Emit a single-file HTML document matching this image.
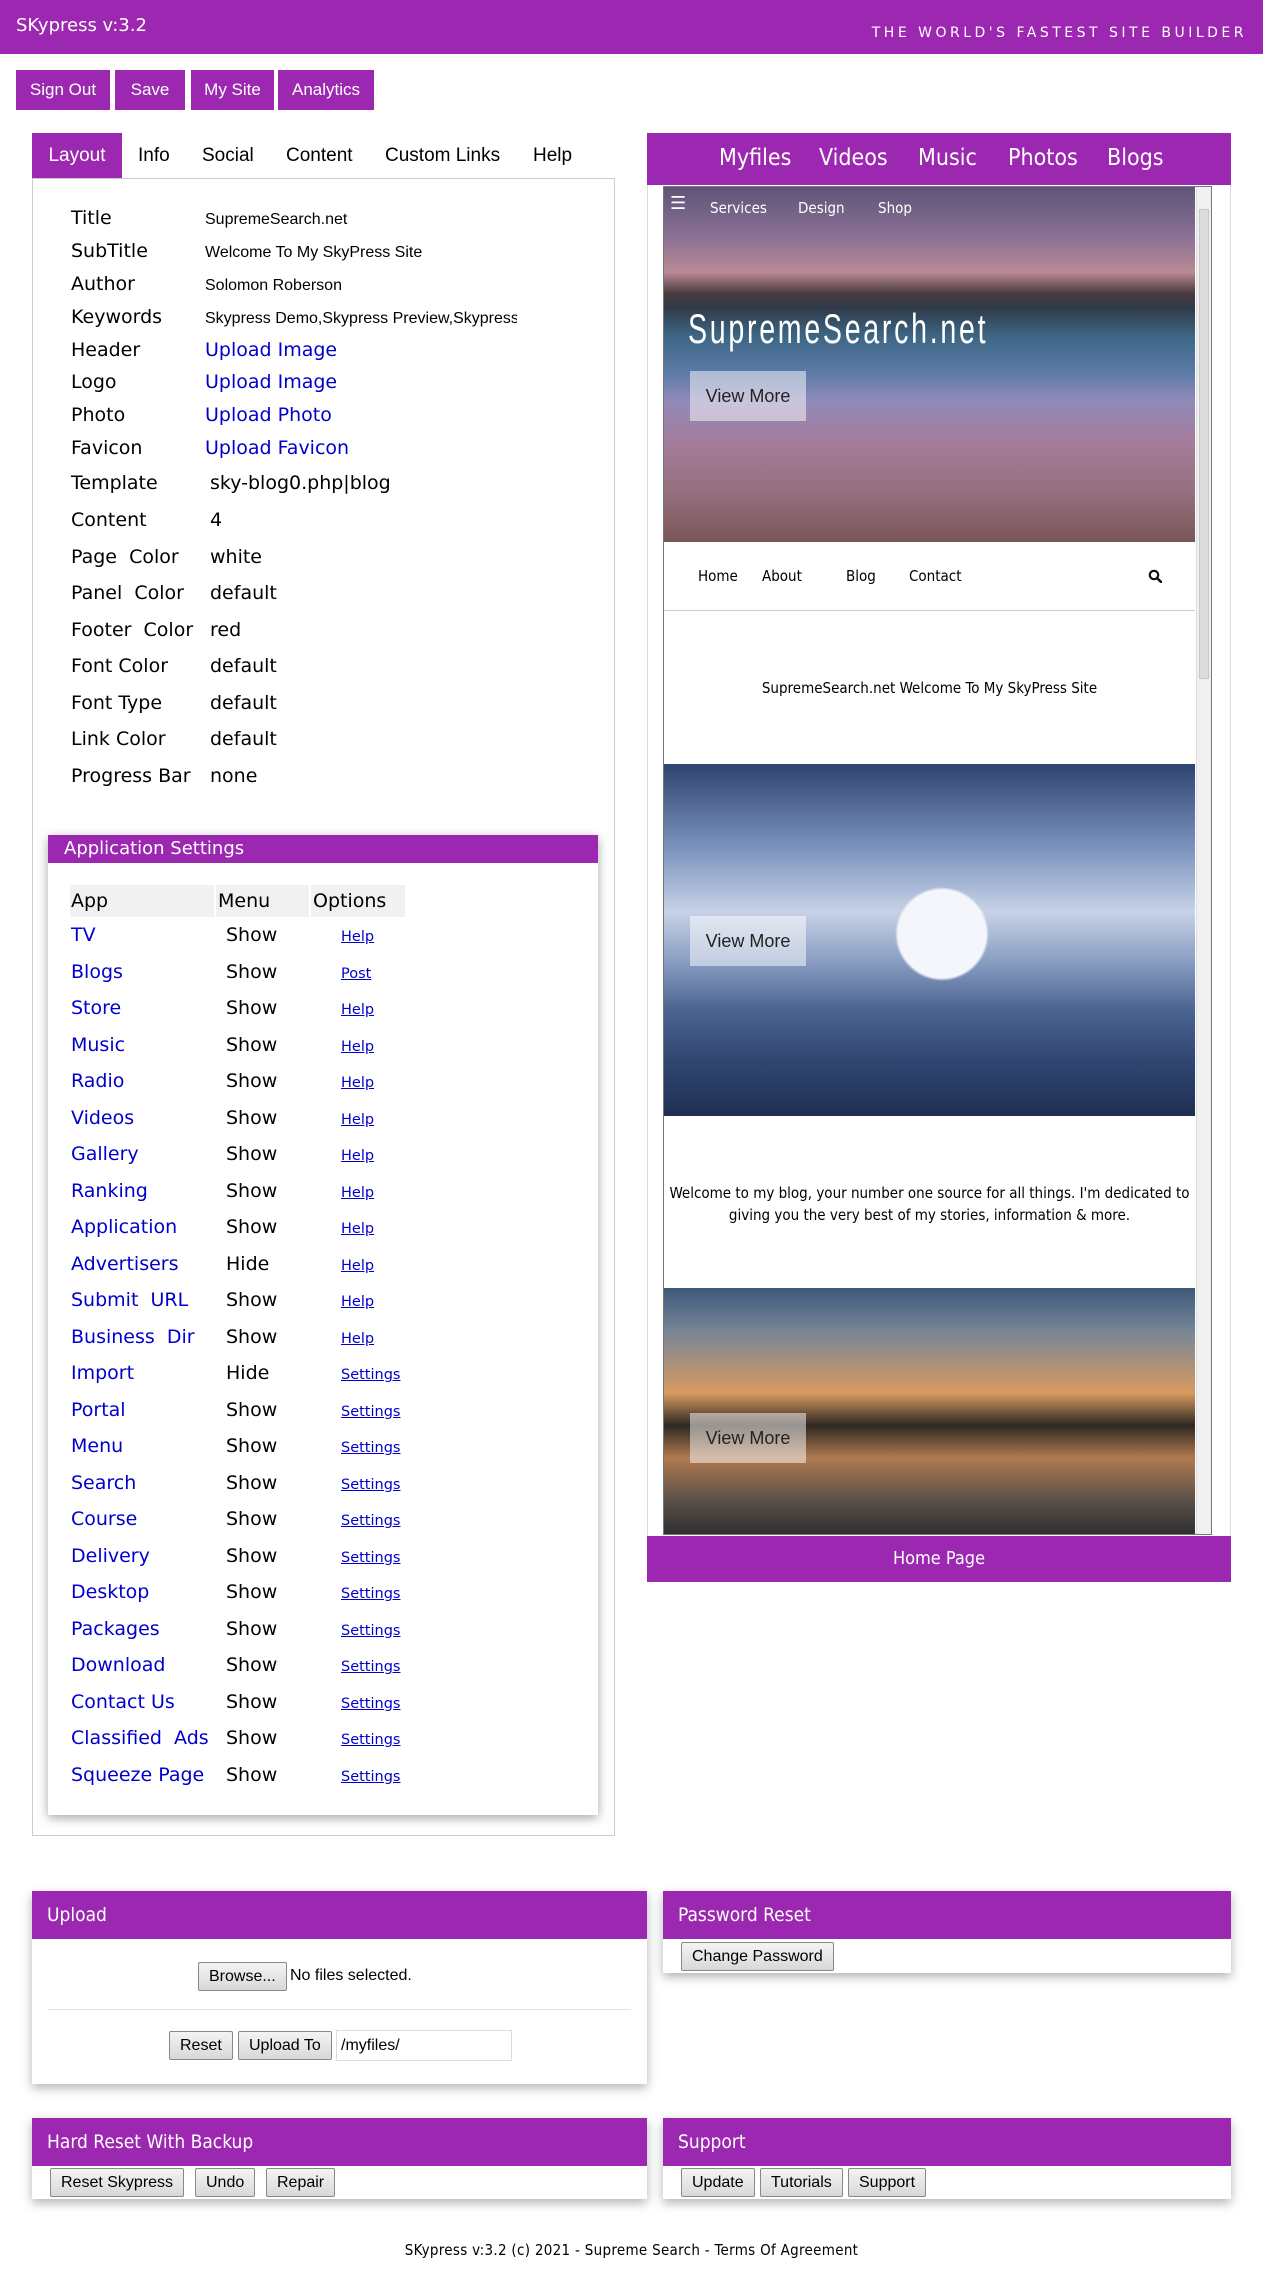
<!DOCTYPE html>
<html><head><meta charset="utf-8"><style>
*{box-sizing:border-box;margin:0;padding:0}
body{width:1263px;height:2284px;position:relative;background:#fff;font-family:"DejaVu Sans",Verdana,sans-serif;color:#000;overflow:hidden}
.a{position:absolute;white-space:nowrap}
.pur{background:#9c27b0;color:#fff}
.btn{position:absolute;top:70px;height:40px;background:#9c27b0;color:#fff;font:17px/40px "Liberation Sans",sans-serif;text-align:center}
.tab{position:absolute;top:133px;height:45px;font:19px/45px "Liberation Sans",sans-serif}
.lbl{position:absolute;left:71px;font-size:19px;white-space:nowrap}
.val{position:absolute;left:205px;font:16px "Liberation Sans",sans-serif;white-space:nowrap}
.lnk{color:#0000cc}
.row{position:absolute;left:0;width:100%;height:36px;font-size:19px;line-height:36px}
.row span{position:absolute}
.row .o{left:270px;font-size:14.5px;color:#00c;text-decoration:underline;top:2px}
.panel{position:absolute;background:#fff;box-shadow:0 4px 10px rgba(0,0,0,.3)}
.ph{height:48px;background:#9c27b0;color:#fff;font:19px/48px "DejaVu Sans Condensed","Liberation Sans Narrow",sans-serif;padding-left:15px}
.gb{position:absolute;height:29px;border:1px solid #888;border-radius:2px;background:linear-gradient(#f4f4f4,#d8d8d8);font:16px/27px "Liberation Sans Narrow","Liberation Sans",sans-serif;padding:0 10px}
.vm{position:absolute;left:26px;width:116px;height:50px;background:rgba(255,255,255,.5);font:18px/50px "Liberation Sans Narrow",sans-serif;text-align:center;color:#222}
.L{position:absolute;left:0;top:3px;width:615px;height:800px}
</style></head><body>
<div class="a pur" style="left:0;top:0;width:1263px;height:54px"></div>
<div class="a" style="left:16px;top:15px;color:#fff;font-size:18px">SKypress v:3.2</div>
<div class="a" style="right:16px;top:25px;color:#fff;font-size:14px;letter-spacing:3.5px">THE WORLD'S FASTEST SITE BUILDER</div>

<div class="btn" style="left:16px;width:94px">Sign Out</div>
<div class="btn" style="left:115px;width:70px">Save</div>
<div class="btn" style="left:191px;width:83px">My Site</div>
<div class="btn" style="left:278px;width:96px">Analytics</div>

<div class="tab pur" style="left:32px;width:90px;text-align:center">Layout</div>
<div class="tab" style="left:138px">Info</div>
<div class="tab" style="left:202px">Social</div>
<div class="tab" style="left:286px">Content</div>
<div class="tab" style="left:385px">Custom Links</div>
<div class="tab" style="left:533px">Help</div>

<div class="a" style="left:32px;top:178px;width:583px;height:1658px;border:1px solid #ccc"></div>

<div class="L">
<div class="lbl" style="top:204px">Title</div><div class="val" style="top:208px">SupremeSearch.net</div>
<div class="lbl" style="top:237px">SubTitle</div><div class="val" style="top:241px">Welcome To My SkyPress Site</div>
<div class="lbl" style="top:270px">Author</div><div class="val" style="top:274px">Solomon Roberson</div>
<div class="lbl" style="top:303px">Keywords</div><div class="val" style="top:307px;width:312px;overflow:hidden">Skypress Demo,Skypress Preview,Skypress Demo</div>
<div class="lbl" style="top:336px">Header</div><div class="val lnk" style="top:336px;font:19px 'DejaVu Sans',sans-serif">Upload Image</div>
<div class="lbl" style="top:368px">Logo</div><div class="val lnk" style="top:368px;font:19px 'DejaVu Sans',sans-serif">Upload Image</div>
<div class="lbl" style="top:401px">Photo</div><div class="val lnk" style="top:401px;font:19px 'DejaVu Sans',sans-serif">Upload Photo</div>
<div class="lbl" style="top:434px">Favicon</div><div class="val lnk" style="top:434px;font:19px 'DejaVu Sans',sans-serif">Upload Favicon</div>
<div class="lbl" style="top:469px">Template</div><div class="val" style="left:210px;top:469px;font:19px 'DejaVu Sans',sans-serif">sky-blog0.php|blog</div>
<div class="lbl" style="top:506px">Content</div><div class="val" style="left:210px;top:506px;font:19px 'DejaVu Sans',sans-serif">4</div>
<div class="lbl" style="top:543px">Page &nbsp;Color</div><div class="val" style="left:210px;top:543px;font:19px 'DejaVu Sans',sans-serif">white</div>
<div class="lbl" style="top:579px">Panel &nbsp;Color</div><div class="val" style="left:210px;top:579px;font:19px 'DejaVu Sans',sans-serif">default</div>
<div class="lbl" style="top:616px">Footer &nbsp;Color</div><div class="val" style="left:210px;top:616px;font:19px 'DejaVu Sans',sans-serif">red</div>
<div class="lbl" style="top:652px">Font Color</div><div class="val" style="left:210px;top:652px;font:19px 'DejaVu Sans',sans-serif">default</div>
<div class="lbl" style="top:689px">Font Type</div><div class="val" style="left:210px;top:689px;font:19px 'DejaVu Sans',sans-serif">default</div>
<div class="lbl" style="top:725px">Link Color</div><div class="val" style="left:210px;top:725px;font:19px 'DejaVu Sans',sans-serif">default</div>
<div class="lbl" style="top:762px">Progress Bar</div><div class="val" style="left:210px;top:762px;font:19px 'DejaVu Sans',sans-serif">none</div>
</div>

<div class="panel" style="left:48px;top:835px;width:550px;height:980px;box-shadow:0 3px 10px rgba(0,0,0,.35)">
<div style="height:28px;background:#9c27b0;color:#fff;font-size:18px;line-height:28px;padding-left:16px">Application Settings</div>
<div style="position:absolute;left:22px;top:50px;width:335px;height:32px">
<div style="position:absolute;left:0;width:144px;height:32px;background:#f1f1f1"></div>
<div style="position:absolute;left:146px;width:93px;height:32px;background:#f1f1f1"></div>
<div style="position:absolute;left:241px;width:94px;height:32px;background:#f1f1f1"></div>
<span class="a" style="left:1px;top:5px;font-size:19px">App</span>
<span class="a" style="left:148px;top:5px;font-size:19px">Menu</span>
<span class="a" style="left:243px;top:5px;font-size:19px">Options</span>
</div>
<div style="position:absolute;left:23px;top:82px;width:500px">
<div class="row" style="top:0"><span class="lnk">TV</span><span style="left:155px">Show</span><span class="o">Help</span></div>
<div class="row" style="top:36.5px"><span class="lnk">Blogs</span><span style="left:155px">Show</span><span class="o">Post</span></div>
<div class="row" style="top:73px"><span class="lnk">Store</span><span style="left:155px">Show</span><span class="o">Help</span></div>
<div class="row" style="top:109.5px"><span class="lnk">Music</span><span style="left:155px">Show</span><span class="o">Help</span></div>
<div class="row" style="top:146px"><span class="lnk">Radio</span><span style="left:155px">Show</span><span class="o">Help</span></div>
<div class="row" style="top:182.5px"><span class="lnk">Videos</span><span style="left:155px">Show</span><span class="o">Help</span></div>
<div class="row" style="top:219px"><span class="lnk">Gallery</span><span style="left:155px">Show</span><span class="o">Help</span></div>
<div class="row" style="top:255.5px"><span class="lnk">Ranking</span><span style="left:155px">Show</span><span class="o">Help</span></div>
<div class="row" style="top:292px"><span class="lnk">Application</span><span style="left:155px">Show</span><span class="o">Help</span></div>
<div class="row" style="top:328.5px"><span class="lnk">Advertisers</span><span style="left:155px">Hide</span><span class="o">Help</span></div>
<div class="row" style="top:365px"><span class="lnk">Submit &nbsp;URL</span><span style="left:155px">Show</span><span class="o">Help</span></div>
<div class="row" style="top:401.5px"><span class="lnk">Business &nbsp;Dir</span><span style="left:155px">Show</span><span class="o">Help</span></div>
<div class="row" style="top:438px"><span class="lnk">Import</span><span style="left:155px">Hide</span><span class="o">Settings</span></div>
<div class="row" style="top:474.5px"><span class="lnk">Portal</span><span style="left:155px">Show</span><span class="o">Settings</span></div>
<div class="row" style="top:511px"><span class="lnk">Menu</span><span style="left:155px">Show</span><span class="o">Settings</span></div>
<div class="row" style="top:547.5px"><span class="lnk">Search</span><span style="left:155px">Show</span><span class="o">Settings</span></div>
<div class="row" style="top:584px"><span class="lnk">Course</span><span style="left:155px">Show</span><span class="o">Settings</span></div>
<div class="row" style="top:620.5px"><span class="lnk">Delivery</span><span style="left:155px">Show</span><span class="o">Settings</span></div>
<div class="row" style="top:657px"><span class="lnk">Desktop</span><span style="left:155px">Show</span><span class="o">Settings</span></div>
<div class="row" style="top:693.5px"><span class="lnk">Packages</span><span style="left:155px">Show</span><span class="o">Settings</span></div>
<div class="row" style="top:730px"><span class="lnk">Download</span><span style="left:155px">Show</span><span class="o">Settings</span></div>
<div class="row" style="top:766.5px"><span class="lnk">Contact Us</span><span style="left:155px">Show</span><span class="o">Settings</span></div>
<div class="row" style="top:803px"><span class="lnk">Classified &nbsp;Ads</span><span style="left:155px">Show</span><span class="o">Settings</span></div>
<div class="row" style="top:839.5px"><span class="lnk">Squeeze Page</span><span style="left:155px">Show</span><span class="o">Settings</span></div>
</div>
</div>

<!-- right preview -->
<div class="a pur" style="left:647px;top:133px;width:584px;height:52px"></div>
<div class="a" style="left:719px;top:145px;color:#fff;font:23px 'DejaVu Sans Condensed','Liberation Sans',sans-serif">Myfiles</div>
<div class="a" style="left:819px;top:145px;color:#fff;font:23px 'DejaVu Sans Condensed','Liberation Sans',sans-serif">Videos</div>
<div class="a" style="left:918px;top:145px;color:#fff;font:23px 'DejaVu Sans Condensed','Liberation Sans',sans-serif">Music</div>
<div class="a" style="left:1008px;top:145px;color:#fff;font:23px 'DejaVu Sans Condensed','Liberation Sans',sans-serif">Photos</div>
<div class="a" style="left:1107px;top:145px;color:#fff;font:23px 'DejaVu Sans Condensed','Liberation Sans',sans-serif">Blogs</div>
<div class="a" style="left:647px;top:185px;width:584px;height:1351px;border-left:1px solid #ddd;border-right:1px solid #ddd"></div>

<div class="a" style="left:663px;top:186px;width:549px;height:1349px;border:1px solid #777;overflow:hidden;background:#fff">
 <div class="a" style="left:0;top:0;width:531px;height:355px;background:linear-gradient(180deg,#5e5478 0%,#8b7095 14%,#b98a95 24%,#4a3a3e 30%,#2f3a48 34%,#3d6684 42%,#5a7aa6 52%,#8f8ab8 60%,#a57c9c 72%,#95707e 86%,#7a5556 100%)">
  <div class="a" style="left:6px;top:6px;color:#fff;font-size:18px">☰</div>
  <div class="a" style="left:46px;top:12px;color:#fff;font:15px 'DejaVu Sans Condensed',sans-serif">Services</div>
  <div class="a" style="left:134px;top:12px;color:#fff;font:15px 'DejaVu Sans Condensed',sans-serif">Design</div>
  <div class="a" style="left:214px;top:12px;color:#fff;font:15px 'DejaVu Sans Condensed',sans-serif">Shop</div>
  <div class="a" style="left:24px;top:118px;color:#fff;font:42px 'Liberation Sans',sans-serif;letter-spacing:4px;transform:scaleX(0.68);transform-origin:0 0">SupremeSearch.net</div>
  <div class="vm" style="top:184px">View More</div>
 </div>
 <div class="a" style="left:34px;top:380px;font:15px 'DejaVu Sans Condensed',sans-serif">Home</div>
 <div class="a" style="left:98px;top:380px;font:15px 'DejaVu Sans Condensed',sans-serif">About</div>
 <div class="a" style="left:182px;top:380px;font:15px 'DejaVu Sans Condensed',sans-serif">Blog</div>
 <div class="a" style="left:245px;top:380px;font:15px 'DejaVu Sans Condensed',sans-serif">Contact</div>
 <svg class="a" style="left:484px;top:382px" width="14" height="14" viewBox="0 0 14 14"><circle cx="6" cy="6" r="4.2" fill="none" stroke="#111" stroke-width="2.2"/><path d="M9 9l4 4" stroke="#111" stroke-width="2.6" stroke-linecap="round"/></svg>
 <div class="a" style="left:0;top:423px;width:531px;border-top:1px solid #ccc"></div>
 <div class="a" style="left:0;top:492px;width:531px;text-align:center;font:15px 'DejaVu Sans Condensed',sans-serif">SupremeSearch.net Welcome To My SkyPress Site</div>
 <div class="a" style="left:0;top:577px;width:531px;height:352px;background:radial-gradient(circle at 278px 170px,#f4f6fb 0 44px,transparent 47px),linear-gradient(180deg,#2e4470 0%,#7f97c0 25%,#c7d2e6 42%,#8ea2c6 55%,#4a6390 70%,#2f4570 85%,#1f2f52 100%)">
  <div class="vm" style="top:152px">View More</div>
 </div>
 <div class="a" style="left:0;top:995px;width:531px;text-align:center;font:15px/22px 'DejaVu Sans Condensed',sans-serif;white-space:normal;padding:0 4px">Welcome to my blog, your number one source for all things. I'm dedicated to giving you the very best of my stories, information &amp; more.</div>
 <div class="a" style="left:0;top:1101px;width:531px;height:250px;background:linear-gradient(180deg,#3d5a7a 0%,#7a8696 18%,#d89a60 42%,#2e2822 55%,#b07a50 68%,#5a5048 85%,#2a2a30 100%)">
  <div class="vm" style="top:125px">View More</div>
 </div>
 <div class="a" style="left:532px;top:0;width:16px;height:1349px;background:#f0f0f0;border-left:1px solid #ddd"></div>
 <div class="a" style="left:535px;top:22px;width:10px;height:470px;background:#dcdcdc;border:1px solid #c8c8c8"></div>
</div>
<div class="a pur" style="left:647px;top:1536px;width:584px;height:46px;text-align:center;font:18px/46px 'DejaVu Sans Condensed',sans-serif">Home Page</div>

<!-- bottom panels -->
<div class="panel" style="left:32px;top:1891px;width:615px;height:193px">
 <div class="ph">Upload</div>
 <div class="gb" style="left:166px;top:71px">Browse...</div>
 <div class="a" style="left:258px;top:76px;font:16px 'Liberation Sans',sans-serif">No files selected.</div>
 <div class="a" style="left:16px;top:118px;width:583px;border-top:1px solid #e4e4e4"></div>
 <div class="gb" style="left:137px;top:140px">Reset</div>
 <div class="gb" style="left:206px;top:140px">Upload To</div>
 <div class="a" style="left:304px;top:139px;width:176px;height:31px;border:1px solid #ddd;font:16px/29px 'Liberation Sans',sans-serif;padding-left:4px">/myfiles/</div>
</div>
<div class="panel" style="left:663px;top:1891px;width:568px;height:82px">
 <div class="ph">Password Reset</div>
 <div class="gb" style="left:18px;top:51px">Change Password</div>
</div>
<div class="panel" style="left:32px;top:2118px;width:615px;height:81px">
 <div class="ph">Hard Reset With Backup</div>
 <div class="gb" style="left:18px;top:50px">Reset Skypress</div>
 <div class="gb" style="left:163px;top:50px">Undo</div>
 <div class="gb" style="left:234px;top:50px">Repair</div>
</div>
<div class="panel" style="left:663px;top:2118px;width:568px;height:81px">
 <div class="ph">Support</div>
 <div class="gb" style="left:18px;top:50px">Update</div>
 <div class="gb" style="left:97px;top:50px">Tutorials</div>
 <div class="gb" style="left:185px;top:50px">Support</div>
</div>
<div class="a" style="left:0;top:2241px;width:1263px;text-align:center;font:15px 'DejaVu Sans Condensed',sans-serif;letter-spacing:0.3px">SKypress v:3.2 (c) 2021 - Supreme Search - Terms Of Agreement</div>
</body></html>
